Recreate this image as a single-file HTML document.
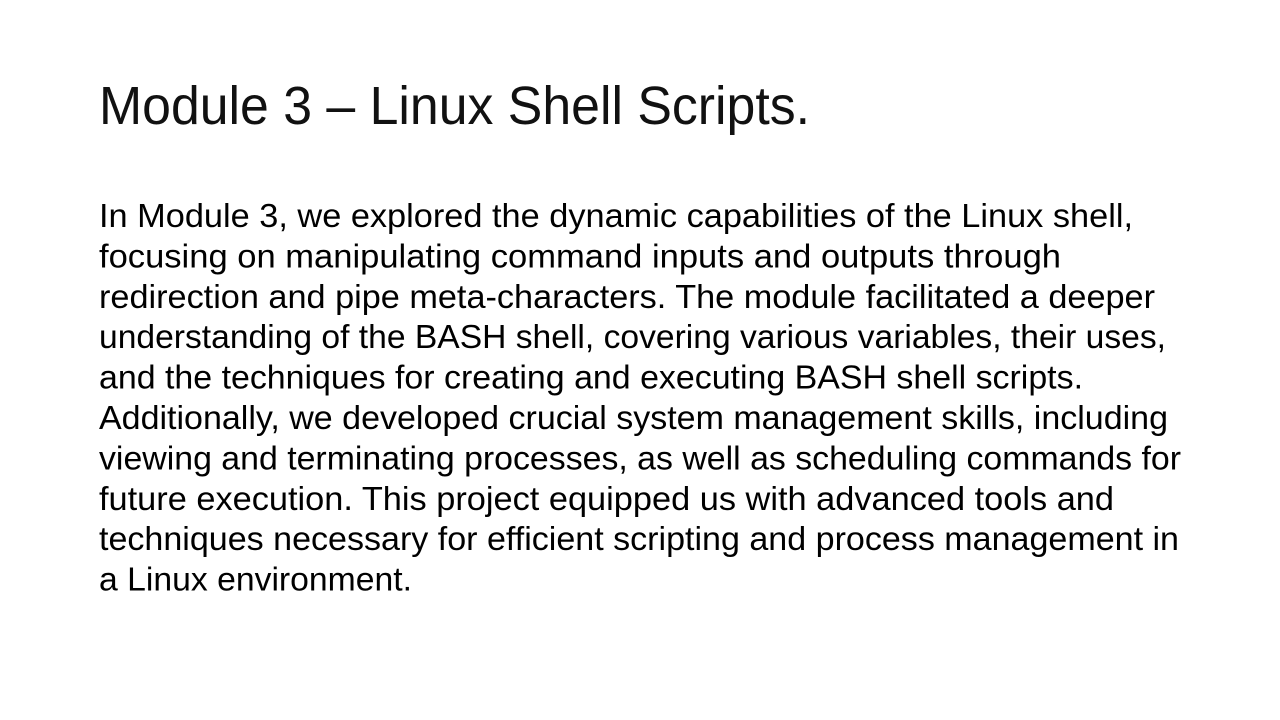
<!DOCTYPE html>
<html><head><meta charset="utf-8"><style>
html,body{margin:0;padding:0;background:#fff;width:1280px;height:720px;overflow:hidden}
svg{display:block}
text{font-family:"Liberation Sans",sans-serif;fill:#000}
</style></head><body>
<svg width="1280" height="720" viewBox="0 0 1280 720">
<text x="99" y="124" font-size="54" textLength="711" lengthAdjust="spacingAndGlyphs" style="fill:#111">Module 3 – Linux Shell Scripts.</text>
<g font-size="33" lengthAdjust="spacingAndGlyphs">
<text x="99" y="227" textLength="1034" lengthAdjust="spacingAndGlyphs">In Module 3, we explored the dynamic capabilities of the Linux shell,</text>
<text x="99" y="267.4" textLength="962" lengthAdjust="spacingAndGlyphs">focusing on manipulating command inputs and outputs through</text>
<text x="99" y="307.8" textLength="1056" lengthAdjust="spacingAndGlyphs">redirection and pipe meta-characters. The module facilitated a deeper</text>
<text x="99" y="348.2" textLength="1067" lengthAdjust="spacingAndGlyphs">understanding of the BASH shell, covering various variables, their uses,</text>
<text x="99" y="388.6" textLength="984" lengthAdjust="spacingAndGlyphs">and the techniques for creating and executing BASH shell scripts.</text>
<text x="99" y="429" textLength="1069" lengthAdjust="spacingAndGlyphs">Additionally, we developed crucial system management skills, including</text>
<text x="99" y="469.4" textLength="1082" lengthAdjust="spacingAndGlyphs">viewing and terminating processes, as well as scheduling commands for</text>
<text x="99" y="509.8" textLength="1015" lengthAdjust="spacingAndGlyphs">future execution. This project equipped us with advanced tools and</text>
<text x="99" y="550.2" textLength="1080" lengthAdjust="spacingAndGlyphs">techniques necessary for efficient scripting and process management in</text>
<text x="99" y="590.6" textLength="313" lengthAdjust="spacingAndGlyphs">a Linux environment.</text>
</g>
</svg>
</body></html>
